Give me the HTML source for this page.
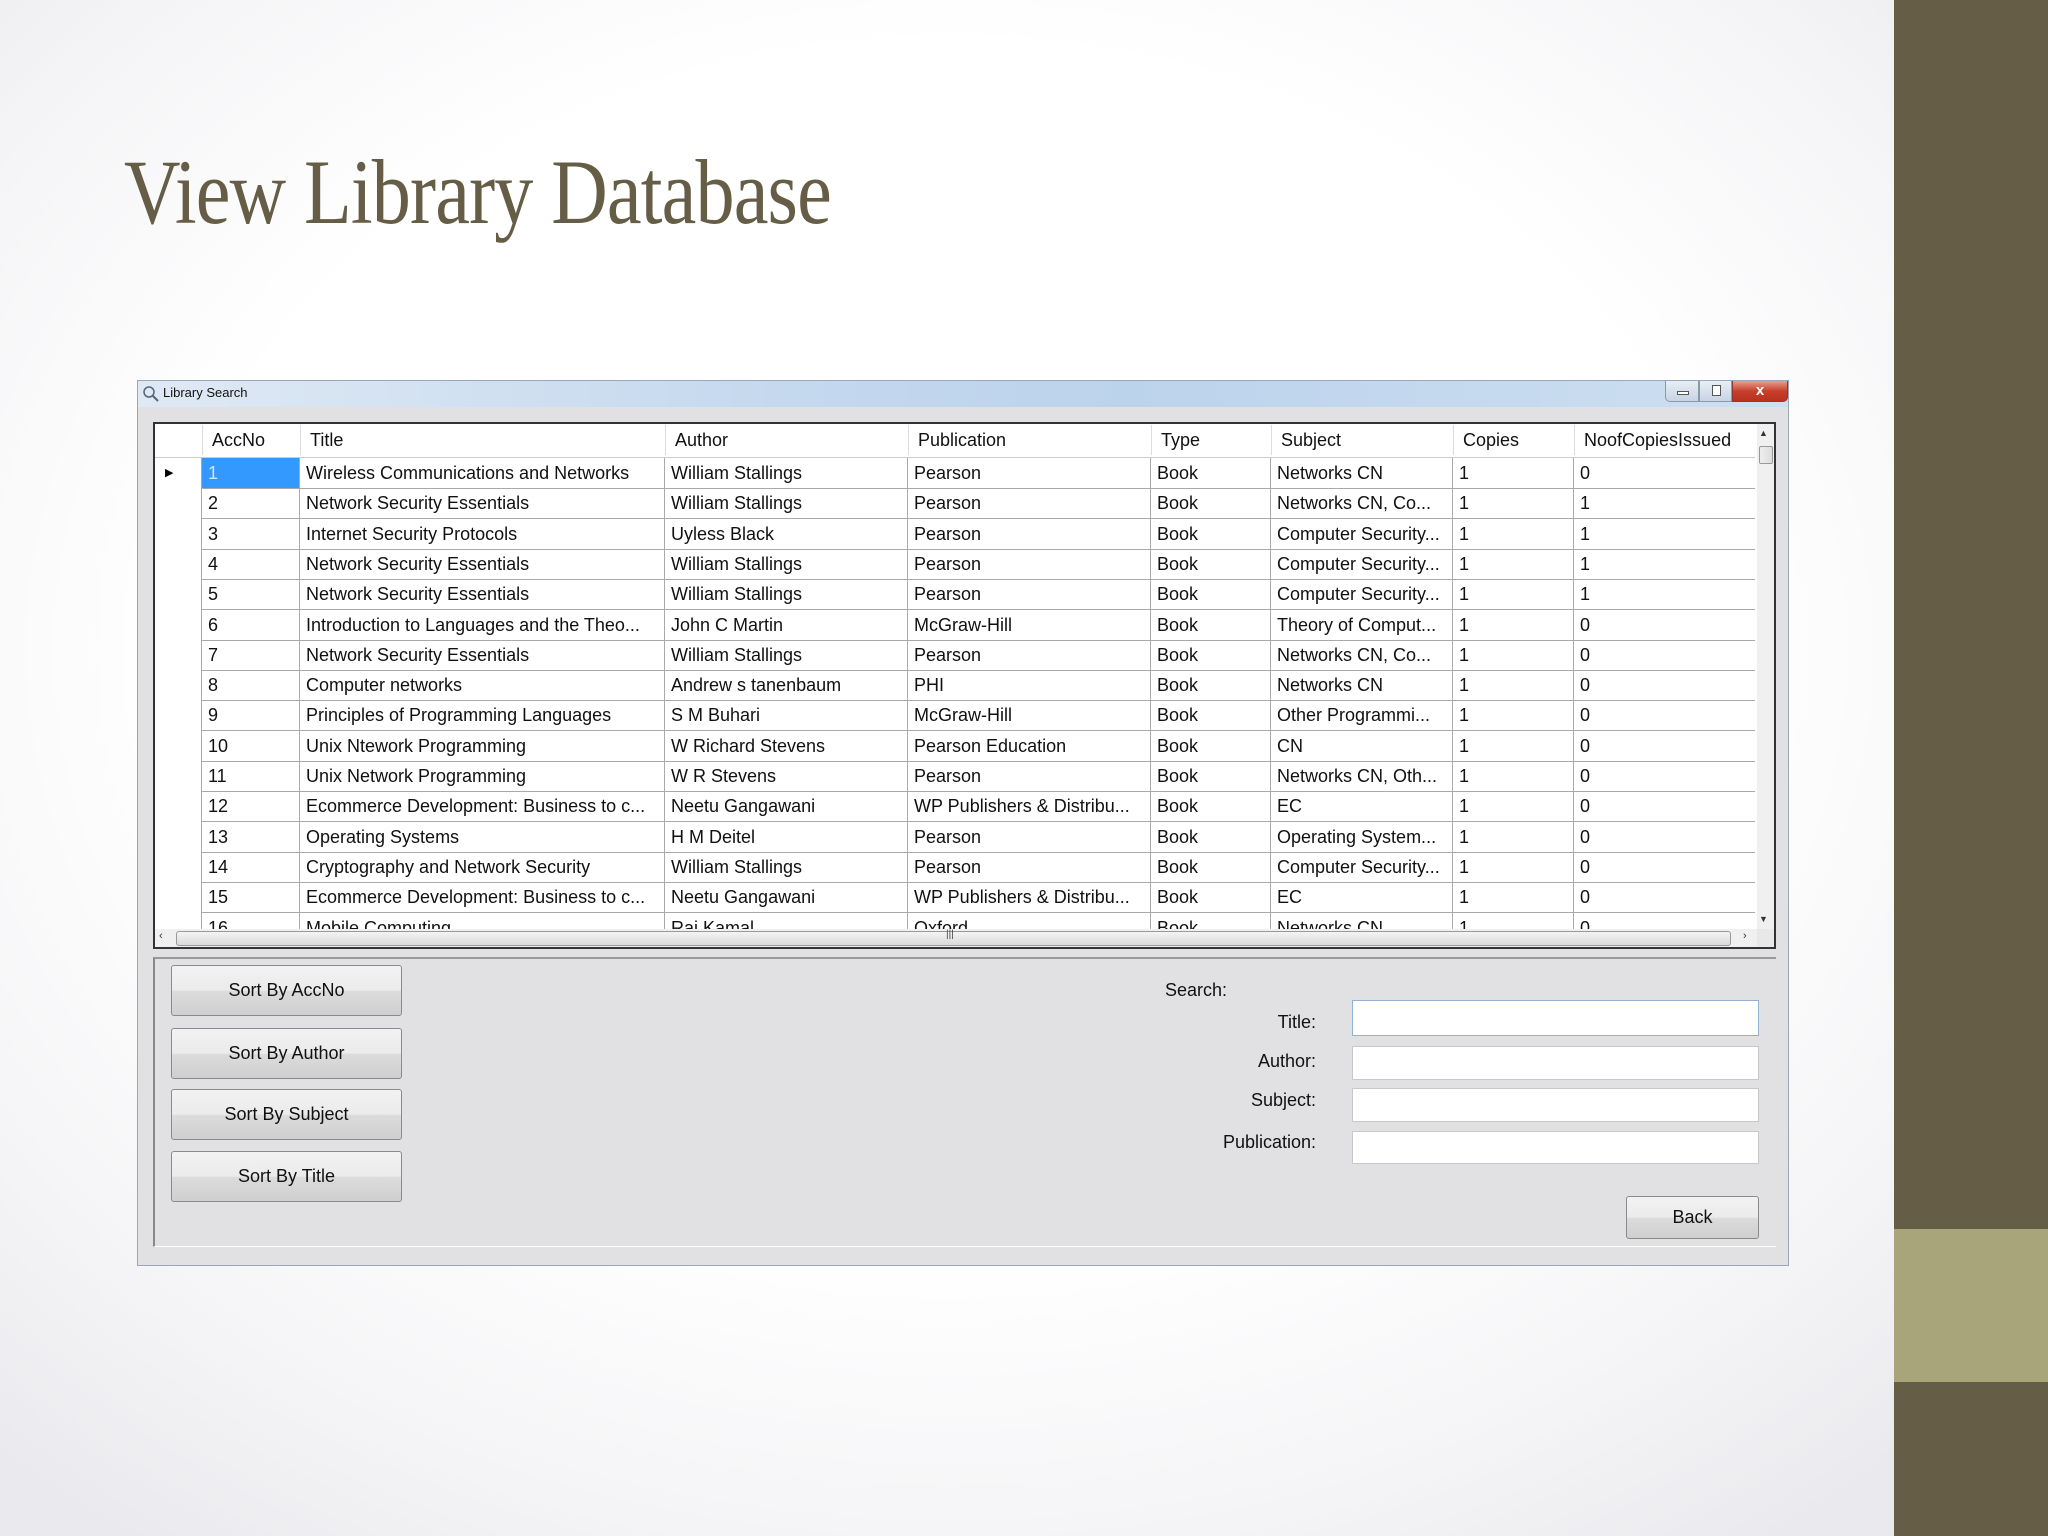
<!DOCTYPE html>
<html><head><meta charset="utf-8">
<style>
*{margin:0;padding:0;box-sizing:border-box}
body{width:2048px;height:1536px;position:relative;overflow:hidden;font-family:"Liberation Sans",sans-serif;
background:radial-gradient(ellipse 1400px 1100px at 950px 650px,#ffffff 55%,#f5f5f7 80%,#eaeaee 100%);}
.abs{position:absolute}
#bar{left:1894px;top:0;width:154px;height:1536px;background:#665d46}
#bar2{left:1894px;top:1229px;width:154px;height:153px;background:#a9a57a}
#title{left:124px;top:140px;font-family:"Liberation Serif",serif;font-size:92px;line-height:1.15;color:#655d46;white-space:nowrap;transform-origin:0 0;transform:scaleX(0.85);letter-spacing:-1px}
#win{left:137px;top:380px;width:1652px;height:886px;background:#e1e1e3;border:1px solid #9aa7b6}
#tb{left:0;top:0;width:1650px;height:26px;background:linear-gradient(90deg,#dfe9f4,#c4d8ee 40%,#bcd3ec 60%,#cddff1);}
#tb span{position:absolute;left:25px;top:4px;font-size:13px;color:#111}
.cell{position:absolute;font-size:18px;color:#111;white-space:nowrap;overflow:hidden;line-height:30px}
#grid{left:153px;top:422px;width:1623px;height:527px;background:#fff;border:2px solid #333}
.btn{position:absolute;left:171px;width:231px;height:51px;border:1px solid #8a8a8a;border-radius:3px;background:linear-gradient(#f2f2f2 0%,#ebebeb 50%,#dcdcdc 51%,#cfcfcf 100%);font-size:18px;text-align:center;line-height:49px;color:#111}
.lbl{position:absolute;font-size:18px;color:#111;text-align:right;width:200px;left:1116px}
.inp{position:absolute;left:1352px;width:407px;background:#fff;border:1px solid #c8c8c8}
</style></head><body>
<div class="abs" id="bar"></div><div class="abs" id="bar2"></div>
<div class="abs" id="title">View Library Database</div>

<div class="abs" id="win">
 <div class="abs" id="tb">
  <svg class="abs" style="left:4px;top:4px" width="18" height="18"><circle cx="7" cy="7" r="5" fill="none" stroke="#567" stroke-width="1.5"/><line x1="10.5" y1="10.5" x2="16" y2="16" stroke="#567" stroke-width="2"/></svg>
  <span>Library Search</span>
  <div class="abs" style="left:1527px;top:0;width:34px;height:21px;border:1px solid #8899aa;border-top:none;border-radius:0 0 0 5px;background:linear-gradient(#e8eef6,#c7d4e4)"><div style="position:absolute;left:11px;top:10px;width:12px;height:4px;border:1px solid #555;background:#fff"></div></div>
  <div class="abs" style="left:1561px;top:0;width:33px;height:21px;border:1px solid #8899aa;border-top:none;background:linear-gradient(#e8eef6,#c7d4e4)"><div style="position:absolute;left:12px;top:4px;width:9px;height:11px;border:1px solid #555;background:#fff"></div></div>
  <div class="abs" style="left:1594px;top:0;width:56px;height:21px;border:1px solid #8a3a30;border-top:none;border-radius:0 0 5px 0;background:linear-gradient(#e8a090,#c8402c 50%,#b83020);color:#fff;font-weight:bold;font-size:15px;text-align:center;line-height:19px">x</div>
 </div>
</div>

<div class="abs" id="grid">
 <div class="abs" style="left:0;top:0;width:1600px;height:505px;overflow:hidden">
 <div id="rows"></div>
 </div>
 <div class="abs" style="left:1602px;top:0;width:17px;height:505px;background:#f0f0f0"></div>
 <div class="abs" style="left:1604px;top:4px;font-size:9px;color:#333">▲</div>
 <div class="abs" style="left:1604px;top:22px;width:14px;height:18px;border:1px solid #999;border-radius:2px;background:linear-gradient(90deg,#eee,#ddd)"></div>
 <div class="abs" style="left:1604px;top:490px;font-size:9px;color:#333">▼</div>
 <div class="abs" style="left:0;top:505px;width:1602px;height:18px;background:#f0f0f0"></div>
 <div class="abs" style="left:4px;top:506px;font-size:11px;color:#333">‹</div>
 <div class="abs" style="left:21px;top:507px;width:1555px;height:15px;border:1px solid #999;border-radius:3px;background:linear-gradient(#f4f4f4,#dadada)"></div>
 <div class="abs" style="left:791px;top:505px;font-size:10px;color:#444">|||</div>
 <div class="abs" style="left:1588px;top:506px;font-size:11px;color:#333">›</div>
 <div class="abs" style="left:1602px;top:505px;width:17px;height:18px;background:#e8e8e8"></div>
</div>

<div class="abs" style="left:153px;top:957px;width:1623px;height:290px;border-top:2px solid #999;border-left:2px solid #888;border-bottom:1px solid #fff"></div>

<div class="btn" style="top:965px">Sort By AccNo</div>
<div class="btn" style="top:1028px">Sort By Author</div>
<div class="btn" style="top:1089px">Sort By Subject</div>
<div class="btn" style="top:1151px">Sort By Title</div>

<div class="abs" style="left:1165px;top:980px;font-size:18px;color:#111">Search:</div>
<div class="lbl" style="top:1012px">Title:</div>
<div class="lbl" style="top:1051px">Author:</div>
<div class="lbl" style="top:1090px">Subject:</div>
<div class="lbl" style="top:1132px">Publication:</div>
<div class="inp" style="top:1000px;height:36px;border-color:#8fb3d0"></div>
<div class="inp" style="top:1046px;height:34px"></div>
<div class="inp" style="top:1088px;height:34px"></div>
<div class="inp" style="top:1131px;height:33px"></div>
<div class="btn" style="left:1626px;top:1196px;width:133px;height:43px;line-height:41px">Back</div>

<script>
var cols=[0,46,144,509,752,995,1115,1297,1418,1600];
var hdr=["","AccNo","Title","Author","Publication","Type","Subject","Copies","NoofCopiesIssued"];
var data=[
["1","Wireless Communications and Networks","William Stallings","Pearson","Book","Networks CN","1","0"],
["2","Network Security Essentials","William Stallings","Pearson","Book","Networks CN, Co...","1","1"],
["3","Internet Security Protocols","Uyless Black","Pearson","Book","Computer Security...","1","1"],
["4","Network Security Essentials","William Stallings","Pearson","Book","Computer Security...","1","1"],
["5","Network Security Essentials","William Stallings","Pearson","Book","Computer Security...","1","1"],
["6","Introduction to Languages and the Theo...","John C Martin","McGraw-Hill","Book","Theory of Comput...","1","0"],
["7","Network Security Essentials","William Stallings","Pearson","Book","Networks CN, Co...","1","0"],
["8","Computer networks","Andrew s tanenbaum","PHI","Book","Networks CN","1","0"],
["9","Principles of Programming Languages","S M Buhari","McGraw-Hill","Book","Other Programmi...","1","0"],
["10","Unix Ntework Programming","W Richard Stevens","Pearson Education","Book","CN","1","0"],
["11","Unix Network Programming","W R Stevens","Pearson","Book","Networks CN, Oth...","1","0"],
["12","Ecommerce Development: Business to c...","Neetu Gangawani","WP Publishers &amp; Distribu...","Book","EC","1","0"],
["13","Operating Systems","H M Deitel","Pearson","Book","Operating System...","1","0"],
["14","Cryptography and Network Security","William Stallings","Pearson","Book","Computer Security...","1","0"],
["15","Ecommerce Development: Business to c...","Neetu Gangawani","WP Publishers &amp; Distribu...","Book","EC","1","0"],
["16","Mobile Computing","Raj Kamal","Oxford","Book","Networks CN","1","0"]];
var h="";
h+='<div style="position:absolute;left:0;top:0;width:1600px;height:34px;background:#fff;border-bottom:1px solid #ccc"></div>';
for(var i=1;i<9;i++){h+='<div class="cell" style="left:'+(cols[i]+1)+'px;top:1px;width:'+(cols[i+1]-cols[i])+'px;padding-left:9px;border-left:1px solid #ddd">'+hdr[i]+'</div>';}
for(var r=0;r<16;r++){
 var t=34+r*30.3;
 for(var c=1;c<9;c++){
  var st='left:'+cols[c]+'px;top:'+t+'px;width:'+(cols[c+1]-cols[c])+'px;height:31px;padding-left:6px;border-left:1px solid #aaa;border-bottom:1px solid #aaa;';
  if(r==0&&c==1)st+='background:#3399ff;color:#cfe6ff;';
  h+='<div class="cell" style="'+st+'">'+data[r][c-1]+'</div>';
 }
}
h+='<div style="position:absolute;left:10px;top:42px;font-size:11px">▶</div>';
document.getElementById("rows").innerHTML=h;
</script>
</body></html>
